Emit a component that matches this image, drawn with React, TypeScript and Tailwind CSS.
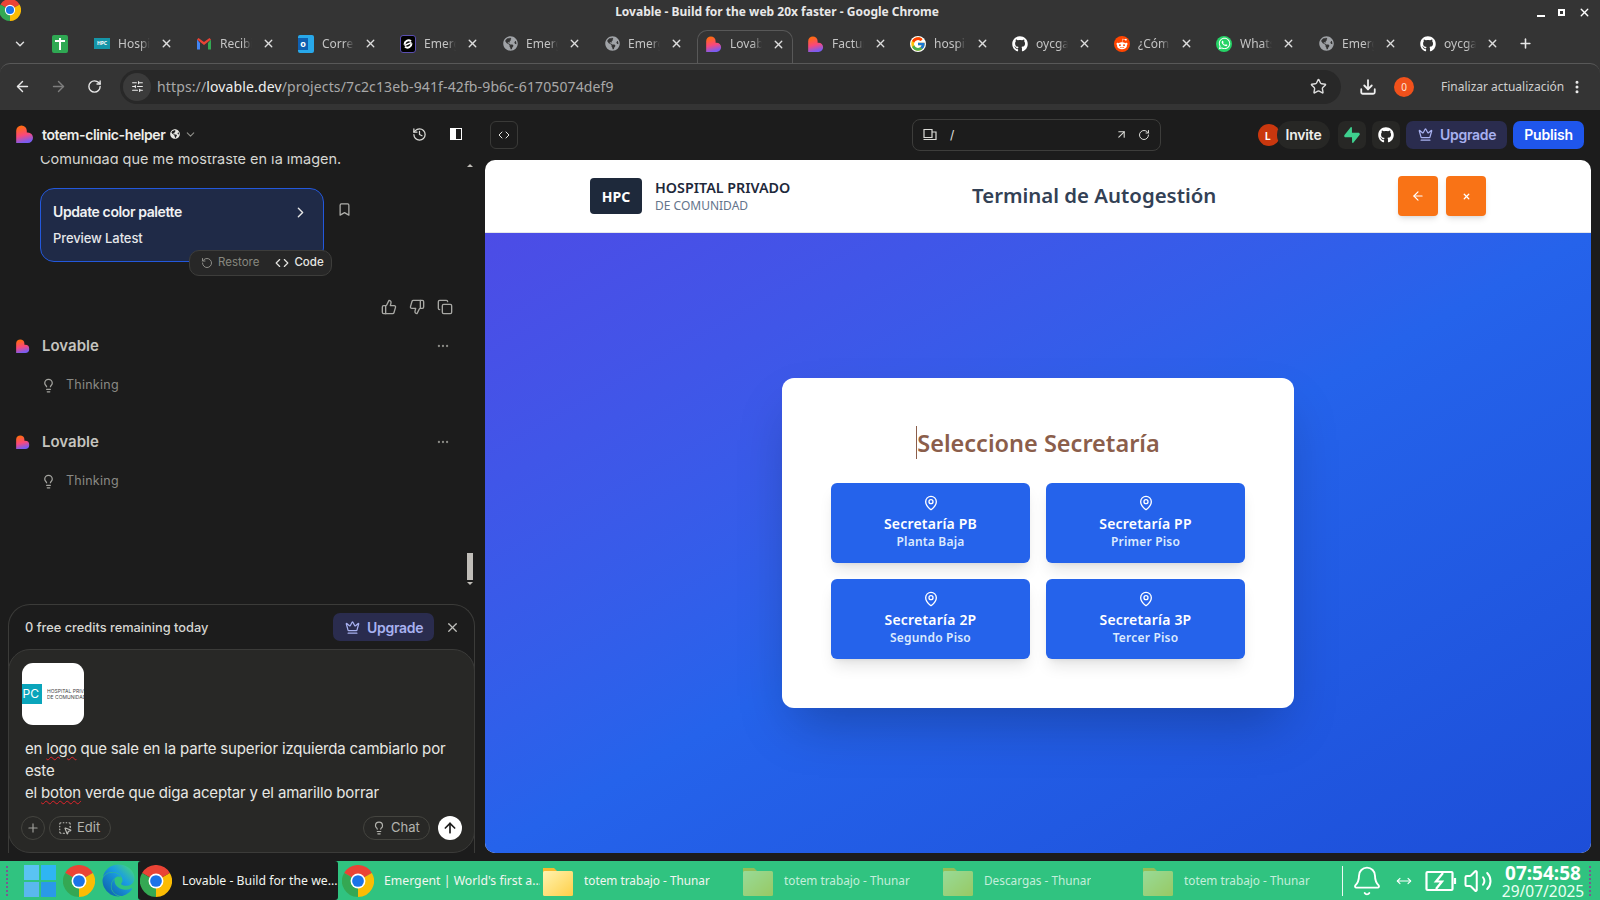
import React from "react";
import {
  ArrowLeft, ArrowRight, ArrowUp, Bell, Bookmark, ChevronDown, ChevronRight, Code, Copy, Crown,
  History, Lightbulb, MapPin, MoreHorizontal, MoreVertical, MoveHorizontal, Plus, RotateCw, Star, ThumbsDown, ThumbsUp, Volume2, X,
  Download, SlidersHorizontal, ArrowUpRight, SquareDashedMousePointer,
} from "lucide-react";
import { FaEdge, FaGithub, FaGlobeAmericas, FaRedditAlien, FaWhatsapp } from "react-icons/fa";
import { FcGoogle } from "react-icons/fc";
import { SiSupabase } from "react-icons/si";

function Heart({ size = 16, id }: { size?: number; id: string }) {
  return (
    <svg width={size} height={size} viewBox="0 0 18 18" className="shrink-0">
      <defs>
        <linearGradient id={id} x1="0.1" y1="0" x2="0.35" y2="1">
          <stop offset="0.1" stopColor="#ff6a12" />
          <stop offset="0.6" stopColor="#f9487c" />
          <stop offset="1" stopColor="#7a5cf0" />
        </linearGradient>
      </defs>
      <path d="M5.5 0.5a5.3 5.3 0 0 1 5.3 5.3v1.7h1a5.2 5.2 0 0 1 0 10.4H0.2V5.8A5.3 5.3 0 0 1 5.5 0.5z" fill={`url(#${id})`} />
    </svg>
  );
}

function ChromeIcon({ size = 32 }: { size?: number }) {
  return (
    <svg width={size} height={size} viewBox="0 0 24 24" className="shrink-0">
      <path d="M12 12 L1.6 6 A12 12 0 0 1 22.4 6 Z" fill="#ea4335" />
      <path d="M12 12 L22.4 6 A12 12 0 0 1 12 24 Z" fill="#fbbc04" />
      <path d="M12 12 L12 24 A12 12 0 0 1 1.6 6 Z" fill="#34a853" />
      <circle cx="12" cy="12" r="5.6" fill="#fff" />
      <circle cx="12" cy="12" r="4.4" fill="#1a73e8" />
    </svg>
  );
}

function Folder({ dim }: { dim?: boolean }) {
  return (
    <svg width="32" height="32" viewBox="0 0 32 32" className={dim ? "shrink-0 opacity-50" : "shrink-0"}>
      <defs>
        <linearGradient id="folderG" x1="0" y1="0" x2="1" y2="1">
          <stop offset="0" stopColor="#fff3b0" />
          <stop offset="1" stopColor="#ffcf48" />
        </linearGradient>
      </defs>
      <path d="M1 3h11l3 3v6H1z" fill="#f7b92e" />
      <rect x="1" y="6" width="30" height="25" rx="1.5" fill="url(#folderG)" />
    </svg>
  );
}

function Gmail() {
  return (
    <svg width="16" height="16" viewBox="0 0 16 16">
      <path d="M1 3.5v10h3V7z" fill="#4285f4" />
      <path d="M12 7v6.5h3v-10z" fill="#34a853" />
      <path d="M1 3.5 L8 9 L15 3.5 L13.5 2 L8 6 L2.5 2z" fill="#ea4335" />
    </svg>
  );
}

function Emergent() {
  return (
    <div className="w-4 h-[18px] bg-black rounded-[3px] flex items-center justify-center border border-[#5a4fb0]">
      <svg width="10" height="10" viewBox="0 0 10 10" fill="none" stroke="#fff" strokeWidth="2">
        <path d="M8 2.2A4 4 0 0 0 1.6 5.6" />
        <path d="M2 7.8A4 4 0 0 0 8.4 4.4" />
        <path d="M1.5 6.5 8.5 3.5" strokeWidth="1.4" />
      </svg>
    </div>
  );
}

function Outlook() {
  return (
    <div className="w-4 h-[18px] bg-[#28a8ea] rounded-[2px] flex items-center">
      <div className="w-[10px] h-[12px] bg-[#0f5fb0] text-white text-[9px] font-bold leading-[12px] text-center">o</div>
    </div>
  );
}

const Globe = () => <FaGlobeAmericas size={15} className="text-[#a0a3a7]" />;
const GitH = () => <FaGithub size={16} className="text-white" />;

const tabs: { icon: React.ReactNode; text: string; active?: boolean }[] = [
  { icon: <div className="w-4 h-[11px] bg-[#1595a8] text-[5px] leading-[11px] text-white font-bold text-center">HPC</div>, text: "Hospital" },
  { icon: <Gmail />, text: "Recibidos" },
  { icon: <Outlook />, text: "Correo" },
  { icon: <Emergent />, text: "Emergent" },
  { icon: <Globe />, text: "Emergent" },
  { icon: <Globe />, text: "Emergent" },
  { icon: <Heart id="h1" />, text: "Lovable", active: true },
  { icon: <Heart id="h2" />, text: "Factura" },
  { icon: <FcGoogle size={16} className="bg-white rounded-full" />, text: "hospital" },
  { icon: <GitH />, text: "oycgarcia" },
  { icon: <div className="w-4 h-4 rounded-full bg-[#ff4500] flex items-center justify-center"><FaRedditAlien size={12} className="text-white" /></div>, text: "¿Cómo" },
  { icon: <div className="w-4 h-4 rounded-full bg-[#25d366] flex items-center justify-center"><FaWhatsapp size={13} className="text-white" /></div>, text: "WhatsApp" },
  { icon: <Globe />, text: "Emergent" },
  { icon: <GitH />, text: "oycgarcia" },
];

function Tab({ icon, text, active }: { icon: React.ReactNode; text: string; active?: boolean }) {
  return (
    <div className={`h-[33px] shrink-0 flex items-center pl-2 pb-[6px] ${active ? "w-[96px] bg-[#343434] rounded-t-[10px] border border-b-0 border-[#585858] -ml-px mr-[7px]" : "w-[102px]"}`}>
      <div className="w-4 h-4 flex items-center justify-center shrink-0">{icon}</div>
      <div className="ml-2 w-[32px] overflow-hidden whitespace-nowrap text-[12px] text-[#c4c4c4] [mask-image:linear-gradient(to_right,black_70%,transparent)]">{text}</div>
      <X size={13} strokeWidth={2.5} className="ml-[10px] text-[#dddddd] shrink-0" />
    </div>
  );
}

function Title() {
  return (
    <div className="h-[24px] flex items-center relative">
      <div className="-mt-1 -ml-px"><ChromeIcon size={22} /></div>
      <div className="flex-1 text-center text-[12px] font-bold text-[#e8e8e8] pr-[4px]">Lovable - Build for the web 20x faster - Google Chrome</div>
      <div className="flex items-center gap-[13px] pr-[9px] text-white">
        <span className="w-[8px] h-[2px] bg-white mt-2" />
        <span className="w-[7px] h-[7px] border-2 border-white" />
        <X size={13} strokeWidth={2.5} />
      </div>
    </div>
  );
}

function TabStrip() {
  return (
    <div className="h-[39px] pt-[6px] flex items-start">
      <div className="w-[40px] h-[27px] flex items-center justify-center"><ChevronDown size={14} strokeWidth={2.5} className="text-[#dddddd]" /></div>
      <div className="w-[46px] h-[27px] flex items-center pl-[12px]">
        <div className="w-4 h-[18px] bg-[#2fa853] rounded-[2px] relative flex items-center justify-center">
          <span className="block w-[2px] h-[12px] bg-white" />
          <span className="block w-[10px] h-[2px] bg-white absolute top-[5px]" />
        </div>
      </div>
      {tabs.map((t, i) => <Tab key={i} {...t} />)}
      <div className="h-[27px] flex items-center ml-[4px]"><Plus size={15} strokeWidth={2.5} className="text-[#e8e8e8]" /></div>
    </div>
  );
}

function Toolbar() {
  return (
    <div className="h-[47px] bg-[#343434] rounded-t-[10px] border-t border-[#585858] flex items-center pl-[14px] pb-[1px]">
      <ArrowLeft size={17} strokeWidth={2} className="text-[#e8e8e8]" />
      <ArrowRight size={17} strokeWidth={2} className="text-[#7e7e7e] ml-[19px]" />
      <RotateCw size={15} strokeWidth={2.2} className="text-[#e8e8e8] ml-[20px]" />
      <div className="ml-[18px] w-[1221px] h-[34px] rounded-full bg-[#282828] flex items-center pl-[3px]">
        <div className="w-[28px] h-[28px] rounded-full bg-[#3b3b3b] flex items-center justify-center"><SlidersHorizontal size={13} className="text-[#eeeeee]" /></div>
        <div className="ml-[6px] text-[14px] text-[#a8a8a8] tracking-[0.13px]">https://<span className="text-[#efefef]">lovable.dev</span>/projects/7c2c13eb-941f-42fb-9b6c-61705074def9</div>
        <Star size={17} strokeWidth={2} className="ml-auto mr-[14px] text-[#dddddd]" />
      </div>
      <Download size={18} strokeWidth={2.4} className="ml-[18px] text-[#eeeeee]" />
      <div className="ml-[17px] w-[20px] h-[20px] rounded-full bg-[#f1511b] text-[#ffe3d8] text-[10px] leading-[20px] text-center">0</div>
      <div className="ml-[27px] text-[12px] text-[#cfcfcf] whitespace-nowrap">Finalizar actualización</div>
      <MoreVertical size={16} strokeWidth={2.5} className="ml-[5px] text-[#eeeeee]" />
    </div>
  );
}

function LovableRow({ id }: { id: string }) {
  return (
    <div className="h-[96px] pl-[16px] pr-[35px] shrink-0">
      <div className="flex items-center h-[26px]">
        <Heart id={id} size={14} />
        <div className="ml-[12px] text-[15px] font-semibold text-[#c5c4bf]">Lovable</div>
        <MoreHorizontal size={14} className="ml-auto text-[#8a8a85]" />
      </div>
      <div className="flex items-center h-[24px] mt-[14px] pl-[25px]">
        <Lightbulb size={15} className="text-[#a5a5a0]" />
        <div className="ml-[10px] text-[12.5px] text-[#8a8a85] tracking-[0.25px]">Thinking</div>
      </div>
    </div>
  );
}

function Chat() {
  return (
    <div className="flex-1 relative overflow-hidden flex flex-col">
      <div className="pl-[40px] -mt-[7px] h-[20px] text-[14.5px] leading-[20px] text-[#d6d6d2]">Comunidad que me mostraste en la imagen.</div>
      <div className="pl-[40px] mt-[19px] flex items-start relative">
        <div className="w-[284px] h-[74px] bg-[#1f2a47] border border-[#2358dc] rounded-[14px] pl-[12px] pr-[14px] pt-[13px]">
          <div className="flex items-center justify-between">
            <div className="text-[14px] font-semibold text-[#f0f1f3] leading-[20px] tracking-[-0.4px]">Update color palette</div>
            <ChevronRight size={17} className="text-[#e5e5e5]" />
          </div>
          <div className="text-[13px] font-medium text-[#e6e7ea] mt-[7px] tracking-[-0.1px]">Preview Latest</div>
        </div>
        <Bookmark size={15} className="ml-[13px] mt-[14px] text-[#b0b0ac]" />
        <div className="absolute left-[189px] top-[62px] w-[143px] h-[26px] bg-[#272727] border border-[#3d3d3b] rounded-[10px] flex items-center pl-[11px] text-[11.5px]">
          <RotateCw size={12} className="text-[#8d8d88] -scale-x-100" />
          <span className="ml-[5px] text-[#87877f]">Restore</span>
          <Code size={14} className="ml-[16px] text-[#e6e6e2]" />
          <span className="ml-[5px] font-medium text-[#e6e6e2]">Code</span>
        </div>
      </div>
      <div className="mt-[37px] pr-[32px] flex justify-end gap-[12px] text-[#a8a8a4] h-[16px] shrink-0">
        <ThumbsUp size={16} />
        <ThumbsDown size={16} />
        <Copy size={16} />
      </div>
      <div className="mt-[18px]"><LovableRow id="h3" /></div>
      <LovableRow id="h4" />
      <div className="absolute right-[12px] top-[397px] w-[6px] h-[27px] bg-[#c0bdb8]" />
      <div className="absolute right-[12px] top-[426px] w-0 h-0 border-x-[3px] border-x-transparent border-t-[3px] border-t-[#c0bdb8]" />
      <div className="absolute right-[12px] top-[8px] w-0 h-0 border-x-[3px] border-x-transparent border-b-[3px] border-b-[#c0bdb8]" />
    </div>
  );
}

function Composer() {
  return (
    <div className="ml-[8px] mr-[10px] h-[249px] border border-b-0 border-[#3b3b39] rounded-t-[22px] flex flex-col shrink-0">
      <div className="h-[44px] flex items-center pl-[16px] pr-[14px] shrink-0">
        <div className="text-[12.8px] font-medium text-[#d6d6d2] pt-[2px]">0 free credits remaining today</div>
        <div className="ml-auto w-[101px] h-[28px] bg-[#2a2c4e] rounded-[7px] flex items-center pl-[12px]">
          <Crown size={15} className="text-[#a8b1f0]" />
          <span className="ml-[7px] text-[14px] font-semibold text-[#a8b1f0] tracking-[-0.3px]">Upgrade</span>
        </div>
        <X size={15} className="ml-[11px] text-[#c0c0bc]" />
      </div>
      <div className="flex-1 -mx-px bg-[#282826] border border-[#3b3b39] rounded-[22px] pl-[13px] pr-[12px] pt-[13px] flex flex-col">
        <div className="w-[62px] h-[62px] bg-white rounded-[11px] overflow-hidden flex items-center">
          <div className="w-[20px] h-[20px] bg-[#0aa5bb] text-white text-[12px] leading-[20px] text-right pr-[3px] overflow-hidden shrink-0">PC</div>
          <div className="ml-[5px] text-[5px] leading-[6px] text-[#444] whitespace-nowrap overflow-hidden">HOSPITAL PRIVADO<br />DE COMUNIDAD</div>
        </div>
        <div className="mt-[13px] text-[15px] leading-[22px] text-[#e7e7e3] pl-[3px] tracking-[-0.17px]">
          en <span className="underline decoration-wavy decoration-[#e0242a] decoration-1 underline-offset-2">logo</span> que sale en la parte superior izquierda cambiarlo por<br />
          este<br />
          el <span className="underline decoration-wavy decoration-[#e0242a] decoration-1 underline-offset-2">boton</span> verde que diga aceptar y el amarillo borrar
        </div>
        <div className="mt-[12px] flex items-center h-[24px]">
          <div className="-ml-px w-[24px] h-[24px] rounded-full border border-[#44443f] flex items-center justify-center"><Plus size={14} className="text-[#a0a09b]" /></div>
          <div className="ml-[4px] h-[24px] w-[62px] rounded-full border border-[#44443f] flex items-center pl-[8px]">
            <SquareDashedMousePointer size={14} className="text-[#c0c0bb]" />
            <span className="ml-[5px] text-[13px] text-[#b4b4af]">Edit</span>
          </div>
          <div className="ml-auto h-[24px] w-[67px] rounded-full border border-[#44443f] flex items-center pl-[8px]">
            <Lightbulb size={14} className="text-[#b4b4af]" />
            <span className="ml-[5px] text-[13px] text-[#b4b4af]">Chat</span>
          </div>
          <div className="ml-[8px] w-[24px] h-[24px] rounded-full bg-white flex items-center justify-center"><ArrowUp size={16} strokeWidth={2.5} className="text-[#1c1c1c]" /></div>
        </div>
      </div>
    </div>
  );
}

function LeftPanel() {
  return (
    <div className="w-[485px] shrink-0 flex flex-col pb-[8px] font-['Inter',sans-serif]">
      <div className="h-[46px] pt-[2px] shrink-0 flex items-center pl-[16px] pr-[23px]">
        <Heart id="h5" size={18} />
        <span className="ml-[8px] text-[14px] font-semibold text-[#eeeeea] tracking-[-0.4px]">totem-clinic-helper</span>
        <FaGlobeAmericas size={10} className="ml-[5px] text-[#e6e6e2]" />
        <ChevronDown size={13} className="ml-[4px] text-[#8f8f8a]" />
        <History size={15} className="ml-auto text-[#dadad6]" />
        <div className="ml-[23px] w-[12px] h-[12px] border border-white flex"><span className="w-[5px] bg-white" /></div>
      </div>
      <Chat />
      <Composer />
    </div>
  );
}

function TopActions() {
  return (
    <div className="h-[50px] flex items-center pl-[5px] pr-[16px] pb-[1px] font-['Inter',sans-serif] relative">
      <div className="w-[28px] h-[28px] rounded-[6px] border border-[#3a3a38] flex items-center justify-center"><Code size={12} className="text-[#e5e5e1]" /></div>
      <div className="ml-[394px] w-[249px] h-[32px] rounded-[8px] border border-[#3d3d3b] flex items-center pl-[10px] pr-[10px]">
        <svg width="14" height="13" viewBox="0 0 14 13" fill="none" stroke="#dadad6" strokeWidth="1.2">
          <path d="M1 1.5h8v8H1zM0.5 11.5h9M9 4h4v7.5H9" />
        </svg>
        <span className="ml-[13px] text-[12px] text-[#e5e5e1]">/</span>
        <ArrowUpRight size={13} className="ml-auto text-[#dadad6]" />
        <RotateCw size={12} className="ml-[10px] text-[#dadad6]" />
      </div>
      <div className="ml-auto flex items-center">
        <div className="w-[22px] h-[22px] rounded-full bg-[#c9370e] text-white text-[10px] font-bold leading-[24px] pl-[7px] -mr-[3px]">L</div>
        <div className="w-[53px] h-[28px] rounded-full bg-[#272725] text-[14px] font-semibold text-[#eeeeea] tracking-[-0.2px] flex items-center justify-center">Invite</div>
        <div className="ml-[8px] w-[28px] h-[28px] rounded-[7px] bg-[#272725] flex items-center justify-center"><SiSupabase size={16} className="text-[#3ecf8e]" /></div>
        <div className="ml-[6px] w-[28px] h-[28px] rounded-[7px] bg-[#272725] flex items-center justify-center"><FaGithub size={16} className="text-white" /></div>
        <div className="ml-[6px] w-[101px] h-[28px] rounded-[7px] bg-[#2a2c4e] flex items-center pl-[12px]">
          <Crown size={15} className="text-[#a8b1f0]" />
          <span className="ml-[7px] text-[14px] font-semibold text-[#a8b1f0] tracking-[-0.3px]">Upgrade</span>
        </div>
        <div className="ml-[6px] w-[71px] h-[28px] rounded-[7px] bg-[#1f56ec] text-[14px] font-semibold text-white tracking-[-0.2px] flex items-center justify-center">Publish</div>
      </div>
    </div>
  );
}

const secs = [
  ["Secretaría PB", "Planta Baja"],
  ["Secretaría PP", "Primer Piso"],
  ["Secretaría 2P", "Segundo Piso"],
  ["Secretaría 3P", "Tercer Piso"],
];

function Preview() {
  return (
    <div className="flex-1 mr-[9px] mb-[8px] rounded-[10px] overflow-hidden bg-white flex flex-col font-['Noto_Sans',sans-serif]">
      <div className="h-[73px] shrink-0 border-b border-[#e5e7eb] flex items-center">
        <div className="w-[896px] mx-auto flex items-center justify-between">
          <div className="flex items-center">
            <div className="w-[52px] h-[36px] rounded-[4px] bg-[#1e293b] text-white text-[14px] font-bold flex items-center justify-center">HPC</div>
            <div className="ml-[13px]">
              <div className="text-[14.3px] leading-[18px] font-semibold text-[#1e293b]">HOSPITAL PRIVADO</div>
              <div className="text-[12px] leading-[17px] text-[#64748b]">DE COMUNIDAD</div>
            </div>
          </div>
          <div className="text-[20.4px] font-semibold text-[#334155] pb-[2px]">Terminal de Autogestión</div>
          <div className="flex gap-[8px]">
            <div className="w-[40px] h-[40px] rounded-[4px] bg-[#f97316] shadow-md flex items-center justify-center"><ArrowLeft size={14} className="text-white" /></div>
            <div className="w-[40px] h-[40px] rounded-[4px] bg-[#f97316] shadow-md flex items-center justify-center"><X size={9} strokeWidth={3.5} className="text-white" /></div>
          </div>
        </div>
      </div>
      <div className="flex-1 bg-gradient-to-br from-[#4c4ce6] via-[#2563eb] to-[#1d4ed8] flex items-center justify-center">
        <div className="w-[512px] bg-white rounded-[12px] shadow-2xl px-[49px] pt-12 pb-[49px]">
          <div className="text-center text-[23.5px] leading-[34px] font-semibold text-[#8b5e4b] mb-[23px]"><span className="inline-block border-l border-[#8b5e4b] h-[33px]">Seleccione Secretaría</span></div>
          <div className="grid grid-cols-2 gap-4">
            {secs.map(([a, b]) => (
              <div key={a} className="h-[80px] bg-[#2563eb] rounded-[6px] shadow-lg flex flex-col items-center justify-center text-white">
                <MapPin size={16} className="mb-[3px] -mt-[2px]" />
                <div className="text-[14px] leading-[19px] font-semibold tracking-[0.2px]">{a}</div>
                <div className="text-[12px] leading-[16px] font-semibold text-[#dbeafe] tracking-[0.2px] mt-px">{b}</div>
              </div>
            ))}
          </div>
        </div>
      </div>
    </div>
  );
}

function TaskItem({ icon, text, w, dim, active, small }: { icon: React.ReactNode; text: string; w: number; dim?: boolean; active?: boolean; small?: boolean }) {
  return (
    <div style={{ width: w }} className={`h-[39px] shrink-0 flex items-center pl-[2px] ${active ? "bg-[#1c1c1c] rounded-[3px]" : ""}`}>
      {icon}
      <span className={`ml-[10px] pt-[1px] whitespace-nowrap overflow-hidden ${small ? "text-[11.8px]" : "text-[12.25px]"} ${dim ? "text-[#c4eedb]" : "text-[#f2f5f0]"}`}>{text}</span>
    </div>
  );
}

function Dots() {
  return <div className="w-[2px] h-[30px] border-l-2 border-dotted border-[#7a5a90]" />;
}

function Taskbar() {
  return (
    <div className="h-[39px] bg-[#30c380] flex items-center pl-[6px] font-['Noto_Sans',sans-serif]">
      <Dots />
      <div className="ml-[16px] w-[32px] h-[32px] grid grid-cols-2 gap-[2px] shrink-0">
        <span className="bg-[#5ac3f3]" /><span className="bg-[#2fb5f4]" /><span className="bg-[#5ab8ee]" /><span className="bg-[#2a9ae8]" />
      </div>
      <div className="ml-[7px]"><ChromeIcon size={32} /></div>
      <svg width="0" height="0" className="absolute"><defs><linearGradient id="edgeG" x1="0" y1="1" x2="1" y2="0"><stop offset="0" stopColor="#0c59a4" /><stop offset="0.6" stopColor="#1b9de2" /><stop offset="1" stopColor="#4ee06a" /></linearGradient></defs></svg>
      <div className="ml-[6px] w-[34px] flex justify-center"><FaEdge size={33} fill="url(#edgeG)" /></div>
      <div className="ml-[3px]"><TaskItem w={200} active icon={<ChromeIcon size={32} />} text="Lovable - Build for the we..." /></div>
      <div className="ml-[2px]"><TaskItem w={200} icon={<ChromeIcon size={32} />} text="Emergent | World's first a..." /></div>
      <TaskItem w={200} small icon={<Folder />} text="totem trabajo - Thunar" />
      <TaskItem w={200} small dim icon={<Folder dim />} text="totem trabajo - Thunar" />
      <TaskItem w={200} small dim icon={<Folder dim />} text="Descargas - Thunar" />
      <TaskItem w={202} small dim icon={<Folder dim />} text="totem trabajo - Thunar" />
      <div className="w-px h-[30px] bg-white/90" />
      <Bell size={32} strokeWidth={1.4} className="ml-[8px] text-white shrink-0" />
      <MoveHorizontal size={16} strokeWidth={1.6} className="ml-[13px] text-white shrink-0" />
      <svg width="32" height="22" viewBox="0 0 32 22" fill="none" stroke="#fff" strokeWidth="2.2" className="ml-[13px] shrink-0">
        <rect x="1.5" y="2" width="26" height="18" rx="1" />
        <path d="M30 8v6" />
        <path d="M18 3 11 11.5h6L11 19" fill="none" />
      </svg>
      <Volume2 size={30} strokeWidth={1.6} className="ml-[6px] text-white shrink-0" />
      <div className="ml-[8px] flex flex-col items-center text-white w-[84px] pt-[2px]">
        <div className="text-[19px] font-bold leading-[19px] whitespace-nowrap">07:54:58</div>
        <div className="text-[15.5px] leading-[16px] text-[#eafff2] whitespace-nowrap">29/07/2025</div>
      </div>
      <div className="ml-[4px]"><Dots /></div>
    </div>
  );
}

export default function App() {
  return (
    <div className="w-[1600px] h-[900px] overflow-hidden flex flex-col bg-[#1c1c1c]">
      <div className="h-[110px] shrink-0 bg-[#343434] font-['Noto_Sans',sans-serif]">
        <Title />
        <TabStrip />
        <Toolbar />
      </div>
      <div className="flex-1 flex min-h-0 bg-[#1c1c1c]">
        <LeftPanel />
        <div className="flex-1 flex flex-col min-w-0">
          <TopActions />
          <Preview />
        </div>
      </div>
      <Taskbar />
    </div>
  );
}
